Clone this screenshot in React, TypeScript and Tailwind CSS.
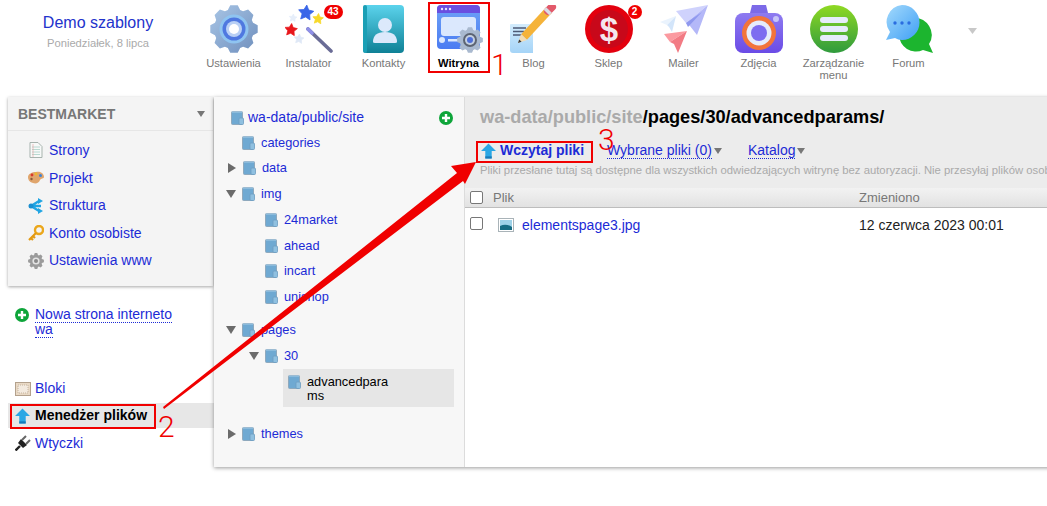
import type { ReactNode } from 'react';

function gearPath(cx: number, cy: number, r: number, tooth: number, n: number) {
    const pts: string[] = [];
    const step = (Math.PI * 2) / n;
    for (let i = 0; i < n; i++) {
        const a = i * step - Math.PI / 2;
        const w = step * 0.2;
        const p = [
            [r, a - step / 2 + w * 0.5],
            [tooth, a - w],
            [tooth, a + w],
            [r, a + step / 2 - w * 0.5],
        ];
        p.forEach(([rad, ang]) => pts.push(`${(cx + rad * Math.cos(ang)).toFixed(2)} ${(cy + rad * Math.sin(ang)).toFixed(2)}`));
    }
    return `M${pts.join('L')}Z`;
}

function Star({ x, y, r, fill }: { x: number; y: number; r: number; fill: string }) {
    const pts: string[] = [];
    for (let i = 0; i < 10; i++) {
        const a = (i * Math.PI) / 5 - Math.PI / 2 + 0.1;
        const rad = i % 2 ? r * 0.5 : r;
        pts.push(`${(x + rad * Math.cos(a)).toFixed(2)},${(y + rad * Math.sin(a)).toFixed(2)}`);
    }
    return <polygon points={pts.join(' ')} fill={fill} strokeLinejoin="round" stroke={fill} strokeWidth="0.8" />;
}

const SettingsIcon = () => (
    <svg viewBox="0 0 48 48" className="w-12 h-12">
        <defs>
            <linearGradient id="g1" x1="0" y1="0" x2="1" y2="1">
                <stop offset="0" stopColor="#a9c6e6" />
                <stop offset="1" stopColor="#6f8fbd" />
            </linearGradient>
        </defs>
        <path d={gearPath(24, 24, 20, 24, 8)} fill="url(#g1)" />
        <circle cx="24" cy="24" r="14.5" fill="#8fc4f0" />
        <circle cx="24" cy="24" r="11.5" fill="#4f78e0" />
        <circle cx="24" cy="24" r="8" fill="#b9d0f5" />
        <circle cx="24" cy="24" r="5" fill="#fff" />
    </svg>
);

const InstallerIcon = () => (
    <svg viewBox="0 0 48 48" className="w-12 h-12">
        <Star x={21} y={8} r={8} fill="#3a66e8" />
        <Star x={33} y={14} r={5.5} fill="#f7d92b" />
        <Star x={6} y={25} r={6.5} fill="#e8161b" />
        <Star x={8} y={13} r={4} fill="#e6eefa" />
        <Star x={14} y={34} r={5} fill="#dfe8f6" />
        <path d="M23 24 L46 46" stroke="#6a6c96" strokeWidth="3.6" strokeLinecap="round" />
        <path d="M23 24 L27 28" stroke="#8f8fe8" strokeWidth="3.6" strokeLinecap="round" />
    </svg>
);

const ContactsIcon = () => (
    <svg viewBox="0 0 48 48" className="w-12 h-12">
        <defs>
            <linearGradient id="g3" x1="0" y1="0" x2="0" y2="1">
                <stop offset="0" stopColor="#5bd3ec" />
                <stop offset="1" stopColor="#0f8196" />
            </linearGradient>
        </defs>
        <rect x="3" y="0" width="41" height="48" rx="4" fill="url(#g3)" />
        <rect x="3" y="0" width="4" height="48" rx="2" fill="#1a9fb5" />
        <circle cx="25" cy="20" r="7" fill="#dce9fb" />
        <path d="M13 37 Q13 27 25 27 Q37 27 37 37 Q37 38 35 38 L15 38 Q13 38 13 37Z" fill="#dce9fb" />
    </svg>
);

const SiteIcon = () => (
    <svg viewBox="0 0 48 48" className="w-12 h-12">
        <defs>
            <linearGradient id="g4" x1="0" y1="0" x2="0" y2="1">
                <stop offset="0" stopColor="#6fa3f7" />
                <stop offset="1" stopColor="#4b7cf2" />
            </linearGradient>
        </defs>
        <rect x="2" y="0" width="43" height="44" rx="4" fill="url(#g4)" />
        <path d="M2 8 V4 Q2 0 6 0 H41 Q45 0 45 4 V8Z" fill="#6a4fe0" />
        <circle cx="7" cy="4" r="1.2" fill="#e6e6ff" />
        <circle cx="11" cy="4" r="1.2" fill="#e6e6ff" />
        <circle cx="15" cy="4" r="1.2" fill="#e6e6ff" />
        <rect x="6" y="12" width="35" height="19" rx="3" fill="#dbe8fd" />
        <circle cx="7" cy="35" r="3" fill="#dbe8fd" />
        <rect x="13" y="34" width="10" height="2.5" fill="#dbe8fd" />
        <path d={gearPath(35, 35, 10.5, 13, 8)} fill="#a9b9cf" />
        <circle cx="35" cy="35" r="7" fill="#5c6472" />
        <circle cx="35" cy="35" r="5" fill="#c4d0e2" />
        <circle cx="35" cy="35" r="3" fill="#4e6fd8" />
    </svg>
);

const BlogIcon = () => (
    <svg viewBox="0 0 48 48" className="w-12 h-12">
        <defs>
            <linearGradient id="g5" x1="0" y1="0" x2="0" y2="1">
                <stop offset="0" stopColor="#d3ecfd" />
                <stop offset="1" stopColor="#a5d4f7" />
            </linearGradient>
        </defs>
        <path d="M0 20 Q0 19 1 19 H23 V48 H3 Q0 48 0 45Z" fill="url(#g5)" />
        <path d="M3 23 H16 M3 26.5 H14 M3 30 H12" stroke="#4d5a75" strokeWidth="1.6" />
        <path d="M14 32 L39 5" stroke="#f5b339" strokeWidth="8" />
        <path d="M38 6 L42 2" stroke="#e2596a" strokeWidth="8" strokeLinecap="round" />
        <path d="M36.5 7.5 L39 5" stroke="#d9dde5" strokeWidth="8" />
        <path d="M11 29 L17 35 L8 38Z" fill="#f3dcb3" />
        <path d="M8 38 L9.2 34.4 L11.6 36.8Z" fill="#3b3b3b" />
    </svg>
);

const ShopIcon = () => (
    <svg viewBox="0 0 48 48" className="w-12 h-12">
        <circle cx="24" cy="24" r="24" fill="#e3000e" />
        <circle cx="24" cy="24" r="19" fill="#c8081a" />
        <text x="24" y="36" textAnchor="middle" fontFamily="'Liberation Sans', sans-serif" fontWeight="700" fontSize="33" fill="#f4e6ee">$</text>
    </svg>
);

const MailerIcon = () => (
    <svg viewBox="0 0 48 48" className="w-12 h-12">
        <path d="M16 6 L48 0 L26 18Z" fill="#cfd2fc" />
        <path d="M26 18 L48 0 L37 30 L30 21Z" fill="#b4b8f8" />
        <path d="M26 18 L42 7 L28 22Z" fill="#8f98ee" />
        <path d="M0 17 L16 11 L7 20Z" fill="#eaf3fd" />
        <path d="M7 20 L16 11 L12 27 L9 22Z" fill="#d3e5fa" />
        <path d="M4 29 L27 26 L10 37Z" fill="#fb9aa0" />
        <path d="M10 37 L27 26 L18 48 L14 39Z" fill="#f27b84" />
    </svg>
);

const PhotosIcon = () => (
    <svg viewBox="0 0 48 48" className="w-12 h-12">
        <defs>
            <linearGradient id="g8" x1="0" y1="0" x2="0" y2="1">
                <stop offset="0" stopColor="#8e7bf0" />
                <stop offset="1" stopColor="#6a4be6" />
            </linearGradient>
        </defs>
        <path d="M15 8 L17 0 H31 L33 8Z" fill="#7c6ae8" />
        <rect x="0" y="8" width="48" height="40" rx="8" fill="url(#g8)" />
        <circle cx="41" cy="14" r="3" fill="#c6c3f7" />
        <circle cx="24" cy="28" r="17" fill="#f2743b" />
        <circle cx="24" cy="28" r="12.5" fill="#e6ecfb" />
        <circle cx="24" cy="28" r="8" fill="#7d6cf0" />
    </svg>
);

const MenuIcon = () => (
    <svg viewBox="0 0 48 48" className="w-12 h-12">
        <defs>
            <linearGradient id="g9" x1="0" y1="0" x2="0" y2="1">
                <stop offset="0" stopColor="#8fd923" />
                <stop offset="1" stopColor="#2f9a3d" />
            </linearGradient>
        </defs>
        <circle cx="24" cy="24" r="24" fill="url(#g9)" />
        <rect x="10" y="12" width="28" height="6" rx="3" fill="#e6ecfb" />
        <rect x="10" y="21" width="28" height="6" rx="3" fill="#e6ecfb" />
        <rect x="10" y="30" width="28" height="6" rx="3" fill="#e6ecfb" />
    </svg>
);

const ForumIcon = () => (
    <svg viewBox="0 0 48 48" className="w-12 h-12">
        <defs>
            <linearGradient id="g10" x1="0" y1="0" x2="1" y2="1">
                <stop offset="0" stopColor="#a4dafc" />
                <stop offset="1" stopColor="#3f9ff5" />
            </linearGradient>
        </defs>
        <path d="M28 13 A17 17 0 0 1 44 39 L48 48 L38 45 A17 17 0 0 1 14 30Z" fill="#1cb52f" />
        <path d="M17 0 A17 17 0 0 1 17 35 Q13 35 10 33 L1 35 L5 27 A17 17 0 0 1 17 0Z" fill="url(#g10)" />
        <circle cx="10" cy="18" r="1.7" fill="#2a6de0" />
        <circle cx="17" cy="18" r="1.7" fill="#2a6de0" />
        <circle cx="24" cy="18" r="1.7" fill="#2a6de0" />
    </svg>
);

const Folder = () => (
    <svg viewBox="0 0 13 14" className="w-[13px] h-[14px] shrink-0">
        <rect x="0.5" y="0.5" width="11" height="13" rx="1" fill="#6fa9d2" stroke="#8fa9bd" />
        <rect x="8" y="7" width="4.5" height="6.5" rx="1" fill="#8fc0e0" stroke="#6c9cc0" strokeWidth="0.8" />
        <path d="M1 1 H11" stroke="#a8cde6" />
    </svg>
);

const Caret = ({ open }: { open: boolean }) =>
    open ? (
        <svg viewBox="0 0 10 8" className="w-[10px] h-2 shrink-0"><path d="M0 0 H10 L5 8Z" fill="#6b6b6b" /></svg>
    ) : (
        <svg viewBox="0 0 8 10" className="w-2 h-[10px] shrink-0"><path d="M0 0 V10 L8 5Z" fill="#6b6b6b" /></svg>
    );

const SmallCaret = () => (
    <svg viewBox="0 0 8 6" className="w-2 h-[6px] ml-0.5"><path d="M0 0 H8 L4 6Z" fill="#777" /></svg>
);

const PlusCircle = () => (
    <svg viewBox="0 0 14 14" className="w-[14px] h-[14px] shrink-0">
        <circle cx="7" cy="7" r="7" fill="#0ea53a" />
        <path d="M7 3 V11 M3 7 H11" stroke="#fff" strokeWidth="2.4" />
    </svg>
);

const UpArrow = () => (
    <svg viewBox="0 0 14 14" className="w-[15px] h-4 shrink-0">
        <path d="M7 0 L14 7 H10 V14 H4 V7 H0Z" fill="#2aa7e4" />
        <path d="M4 12 H10 V14 H4Z" fill="#1679b8" />
    </svg>
);

const PageIcon = () => (
    <svg viewBox="0 0 16 16" className="w-4 h-4">
        <path d="M2 0.5 H10 L14 4.5 V15.5 H2Z" fill="#f7f9f8" stroke="#a7b3ae" />
        <path d="M4 5 H12 M4 7.5 H12 M4 10 H12 M4 12.5 H12" stroke="#a9d0c6" strokeWidth="0.8" />
        <path d="M5 2 V15" stroke="#e59a9a" strokeWidth="0.6" />
    </svg>
);

const PaletteIcon = () => (
    <svg viewBox="0 0 16 16" className="w-4 h-4">
        <path d="M8 2 C13 1 16 4 16 7 C16 9 13 8 12 10 C11 13 8 14 5 13 C1 12 0 9 0 7 C0 4 4 2 8 2Z" fill="#e0a56c" />
        <circle cx="4" cy="5" r="1.4" fill="#d83a2c" />
        <circle cx="8" cy="4" r="1.4" fill="#eeb92f" />
        <circle cx="12.5" cy="5.5" r="1.5" fill="#3a83d8" />
        <circle cx="3.5" cy="9" r="1.2" fill="#8a5b3a" />
    </svg>
);

const TreeIcon = () => (
    <svg viewBox="0 0 16 16" className="w-4 h-4">
        <path d="M3 8 L11 3 M3 8 L11 13 M3 8 H13" stroke="#22a5e3" strokeWidth="2.4" fill="none" />
        <path d="M10 0 L15 3 L10 6Z M10 10 L15 13 L10 16Z" fill="#22a5e3" />
        <circle cx="3" cy="8" r="2.5" fill="#1b8fd0" />
    </svg>
);

const KeyIcon = () => (
    <svg viewBox="0 0 16 16" className="w-4 h-4">
        <circle cx="11" cy="5" r="4" fill="none" stroke="#eba71c" strokeWidth="2.4" />
        <path d="M8 8 L1 15 M3 13 L5 15 M5 11 L7 13" stroke="#e39a12" strokeWidth="2.2" />
    </svg>
);

const GearSmall = () => (
    <svg viewBox="0 0 16 16" className="w-4 h-4">
        <path d={gearPath(8, 8, 6.3, 8, 8)} fill="#9b9b9b" />
        <circle cx="8" cy="8" r="3.6" fill="#e4e4e4" />
        <circle cx="8" cy="8" r="2" fill="#8a8a8a" />
    </svg>
);

const BlocksIcon = () => (
    <svg viewBox="0 0 16 14" className="w-4 h-[14px]">
        <rect x="0.5" y="0.5" width="15" height="13" fill="#e9d9c5" stroke="#b3a18d" />
        <rect x="3" y="3" width="10" height="8" fill="#f3eadf" stroke="#c4b39f" strokeDasharray="1 1" />
    </svg>
);

const PlugIcon = () => (
    <svg viewBox="0 0 16 16" className="w-4 h-4">
        <path d="M0.5 15.5 L5 11" stroke="#222" strokeWidth="2.4" />
        <path d="M3 8 L8 13 L12 10 L6 4Z" fill="#222" />
        <path d="M7 5 L11 1 M11 9 L15 5" stroke="#666" strokeWidth="2" />
    </svg>
);

const ImageFile = () => (
    <svg viewBox="0 0 16 14" className="w-4 h-[14px] shrink-0">
        <rect x="0.5" y="0.5" width="15" height="13" fill="#fff" stroke="#a9b3b8" />
        <rect x="2" y="2" width="12" height="10" fill="#9ed2e8" />
        <path d="M2 8 Q8 5 14 9 V12 H2Z" fill="#176c83" />
    </svg>
);

const apps: { label: ReactNode; icon: ReactNode; badge?: string; active?: boolean }[] = [
    { label: 'Ustawienia', icon: <SettingsIcon /> },
    { label: 'Instalator', icon: <InstallerIcon />, badge: '43' },
    { label: 'Kontakty', icon: <ContactsIcon /> },
    { label: 'Witryna', icon: <SiteIcon />, active: true },
    { label: 'Blog', icon: <BlogIcon /> },
    { label: 'Sklep', icon: <ShopIcon />, badge: '2' },
    { label: 'Mailer', icon: <MailerIcon /> },
    { label: 'Zdjęcia', icon: <PhotosIcon /> },
    { label: <>Zarządzanie<br />menu</>, icon: <MenuIcon /> },
    { label: 'Forum', icon: <ForumIcon /> },
];

const siteLinks = [
    { label: 'Strony', icon: <PageIcon />, h: 'h-[28px]' },
    { label: 'Projekt', icon: <PaletteIcon />, h: 'h-[28px]' },
    { label: 'Struktura', icon: <TreeIcon />, h: 'h-[27px]' },
    { label: 'Konto osobiste', icon: <KeyIcon />, h: 'h-[28px]' },
    { label: 'Ustawienia www', icon: <GearSmall />, h: 'h-[27px]' },
];

const tree = [
    { label: 'categories', row: 'h-[25px] pl-[28px]', caret: null },
    { label: 'data', row: 'h-[26px] pl-[12px]', caret: false },
    { label: 'img', row: 'h-[26px] pl-[11px]', caret: true },
    { label: '24market', row: 'h-[26px] pl-[51px]', caret: null },
    { label: 'ahead', row: 'h-[25px] pl-[51px]', caret: null },
    { label: 'incart', row: 'h-[26px] pl-[51px]', caret: null },
    { label: 'unishop', row: 'h-[26px] pl-[51px] mb-[7px]', caret: null },
    { label: 'pages', row: 'h-[26px] pl-[11px]', caret: true },
    { label: '30', row: 'h-[26px] pl-[34px]', caret: true },
];

const link = 'text-[#1c2bd6]';

export default function App() {
    return (
        <div className="relative w-[1047px] h-[506px] overflow-hidden bg-white font-['Liberation_Sans',Arial,sans-serif]">
            {/* Top app bar */}
            <header className="flex h-[97px]">
                <div className="w-[196px] pt-[13px] text-center">
                    <div className="text-[16px] leading-[20px] text-[#2233cc]">Demo szablony</div>
                    <div className="mt-[3px] text-[11.2px] leading-[14px] text-[#aaa]">Poniedziałek, 8 lipca</div>
                </div>
                <nav className="flex">
                    {apps.map((app, i) => (
                        <div key={i} className="w-[75px] pt-[5px] flex flex-col items-center">
                            <div className="relative w-12 h-12">
                                {app.icon}
                                {app.badge && (
                                    <span className={`absolute top-0 h-[14px] rounded-full bg-[#f00000] text-white text-[10px] font-bold leading-[14px] text-center ${app.badge.length > 1 ? '-right-[10px] w-[19px]' : '-right-[9px] w-[14px]'}`}>
                                        {app.badge}
                                    </span>
                                )}
                            </div>
                            <div className={`mt-[4px] text-[11.2px] leading-[12px] text-center ${app.active ? 'font-bold text-black' : 'text-[#777]'}`}>
                                {app.label}
                            </div>
                        </div>
                    ))}
                </nav>
                <svg viewBox="0 0 12 8" className="ml-[21px] mt-[28px] w-[11px] h-[6px]"><path d="M0 0 H12 L6 8Z" fill="#c8c8c8" /></svg>
            </header>

            <div className="flex">
                {/* Left sidebar */}
                <aside className="w-[214px] shrink-0">
                    <div className="ml-[8px] w-[205px] h-[189px] bg-[#f4f4f4] shadow-[0_1px_3px_rgba(0,0,0,0.35)]">
                        <div className="flex items-center justify-between h-[34px] pt-[1px] pl-[10px] pr-[8px] border-b border-[#e6e6e6]">
                            <span className="text-[14px] font-bold text-[#777]">BESTMARKET</span>
                            <svg viewBox="0 0 8 6" className="w-2 h-[6px]"><path d="M0 0 H8 L4 6Z" fill="#777" /></svg>
                        </div>
                        <ul className="pt-[5px]">
                            {siteLinks.map(item => (
                                <li key={item.label} className={`flex items-center pl-[20px] gap-[5px] text-[14px] ${link} ${item.h}`}>
                                    {item.icon}
                                    {item.label}
                                </li>
                            ))}
                        </ul>
                    </div>

                    <div className="flex pl-[15px] pt-[21px] gap-[6px]">
                        <div className="pt-[1px]"><PlusCircle /></div>
                        <a className={`w-[145px] break-all text-[14px] leading-[15px] ${link}`}>
                            <span className="border-b border-dotted border-[#1c2bd6]">Nowa strona interneto wa</span>
                        </a>
                    </div>

                    <ul className="mt-[38px]">
                        <li className={`flex items-center h-[28px] pb-[1px] pl-[15px] gap-[4px] text-[14px] ${link}`}><BlocksIcon />Bloki</li>
                        <li className="flex items-center h-[25px] ml-[8px] pl-[7px] gap-[5px] text-[14px] font-bold text-black bg-[#e7e7e7]"><UpArrow />Menedżer plików</li>
                        <li className={`flex items-center h-[30px] pl-[15px] gap-[4px] text-[14px] ${link}`}><PlugIcon />Wtyczki</li>
                    </ul>
                </aside>

                {/* File manager panel */}
                <main className="flex flex-1 h-[370px] shadow-[0_1px_4px_rgba(0,0,0,0.4)]">
                    <div className="w-[251px] shrink-0 bg-[#f7f7f7] border-r border-[#dcdcdc] pt-[8px] text-[12.8px]">
                        <div className="flex items-center h-[25px] pl-[17px] pr-[11px] gap-[4px] text-[14px]">
                            <Folder />
                            <span className={`flex-1 ${link}`}>wa-data/public/site</span>
                            <PlusCircle />
                        </div>
                        {tree.map(node => (
                            <div key={node.label} className={`flex items-center ${node.row}`}>
                                {node.caret !== null && <span className="mr-[6px] flex justify-center w-[11px]"><Caret open={node.caret} /></span>}
                                <Folder />
                                <span className={`ml-[6px] ${link}`}>{node.label}</span>
                            </div>
                        ))}
                        <div className="ml-[69px] mr-[10px] h-[38px] flex bg-[#e6e6e6] pl-[5px] pt-[6px]">
                            <Folder />
                            <span className="ml-[6px] w-[84px] break-all leading-[14px] text-black">advancedparams</span>
                        </div>
                        <div className="mt-[14px] flex items-center h-[26px] pl-[12px]">
                            <span className="mr-[5px] flex justify-center w-[11px]"><Caret open={false} /></span>
                            <Folder />
                            <span className={`ml-[6px] ${link}`}>themes</span>
                        </div>
                    </div>

                    <div className="flex-1 min-w-0 overflow-hidden bg-white">
                        <div className="h-[91px] bg-[#ececec] pl-[15px] whitespace-nowrap">
                            <h1 className="pt-[9px] text-[18.2px] leading-[22px] font-bold">
                                <span className="text-[#aaa]">wa-data/public/site</span>
                                <span className="text-black">/pages/30/advancedparams/</span>
                            </h1>
                            <div className="flex items-center mt-[14px] h-[17px] text-[14px]">
                                <span className={`flex items-center gap-[4px] w-[127px] pl-[1px] font-bold ${link}`}><UpArrow />Wczytaj pliki</span>
                                <span className="flex items-center w-[141px]">
                                    <span className={`border-b border-dotted border-[#1c2bd6] leading-[15px] ${link}`}>Wybrane pliki (0)</span>
                                    <SmallCaret />
                                </span>
                                <span className="flex items-center">
                                    <span className={`border-b border-dotted border-[#1c2bd6] leading-[15px] ${link}`}>Katalog</span>
                                    <SmallCaret />
                                </span>
                            </div>
                            <p className="mt-[4px] text-[11.3px] leading-[14px] text-[#aaa]">
                                Pliki przesłane tutaj są dostępne dla wszystkich odwiedzających witrynę bez autoryzacji. Nie przesyłaj plików osobistych.
                            </p>
                        </div>
                        <div className="flex items-center h-[20px] pl-[5px] bg-gradient-to-b from-[#f2f2f2] to-[#e2e2e2] border-b border-[#bdbdbd] text-[13px] text-[#777]">
                            <span className="w-[13px] h-[13px] bg-white border border-[#777] rounded-[2px]" />
                            <span className="ml-[10px] w-[366px]">Plik</span>
                            <span>Zmieniono</span>
                        </div>
                        <div className="flex items-center h-[34px] pl-[5px] text-[14px]">
                            <span className="w-[13px] h-[13px] -mt-[3px] bg-white border border-[#777] rounded-[2px]" />
                            <span className="ml-[15px]"><ImageFile /></span>
                            <span className={`ml-[8px] w-[337px] ${link}`}>elementspage3.jpg</span>
                            <span className="text-[#222]">12 czerwca 2023 00:01</span>
                        </div>
                    </div>
                </main>
            </div>

            {/* Hand-drawn annotations */}
            <div className="absolute left-[428px] top-[2px] w-[62px] h-[71px] border-2 border-[#f00000]" />
            <div className="absolute left-[10px] top-[404px] w-[146px] h-[25px] border-2 border-[#f00000]" />
            <div className="absolute left-[476px] top-[141px] w-[117px] h-[22px] border-2 border-[#f00000]" />
            <svg viewBox="0 0 1047 506" className="absolute inset-0 w-[1047px] h-[506px] pointer-events-none">
                <polygon points="163,407 457,173 451,166 476,162 465,184 463,181 164,409" fill="#f00000" />
            </svg>
            <span className="absolute left-[491px] top-[47px] text-[30px] leading-[36px] font-['Roboto',sans-serif] font-light text-[#f00000]">1</span>
            <span className="absolute left-[158px] top-[409px] text-[30px] leading-[36px] font-['Roboto',sans-serif] font-light text-[#f00000]">2</span>
            <span className="absolute left-[598px] top-[122px] text-[30px] leading-[36px] font-['Roboto',sans-serif] font-light text-[#f00000]">3</span>
        </div>
    );
}
